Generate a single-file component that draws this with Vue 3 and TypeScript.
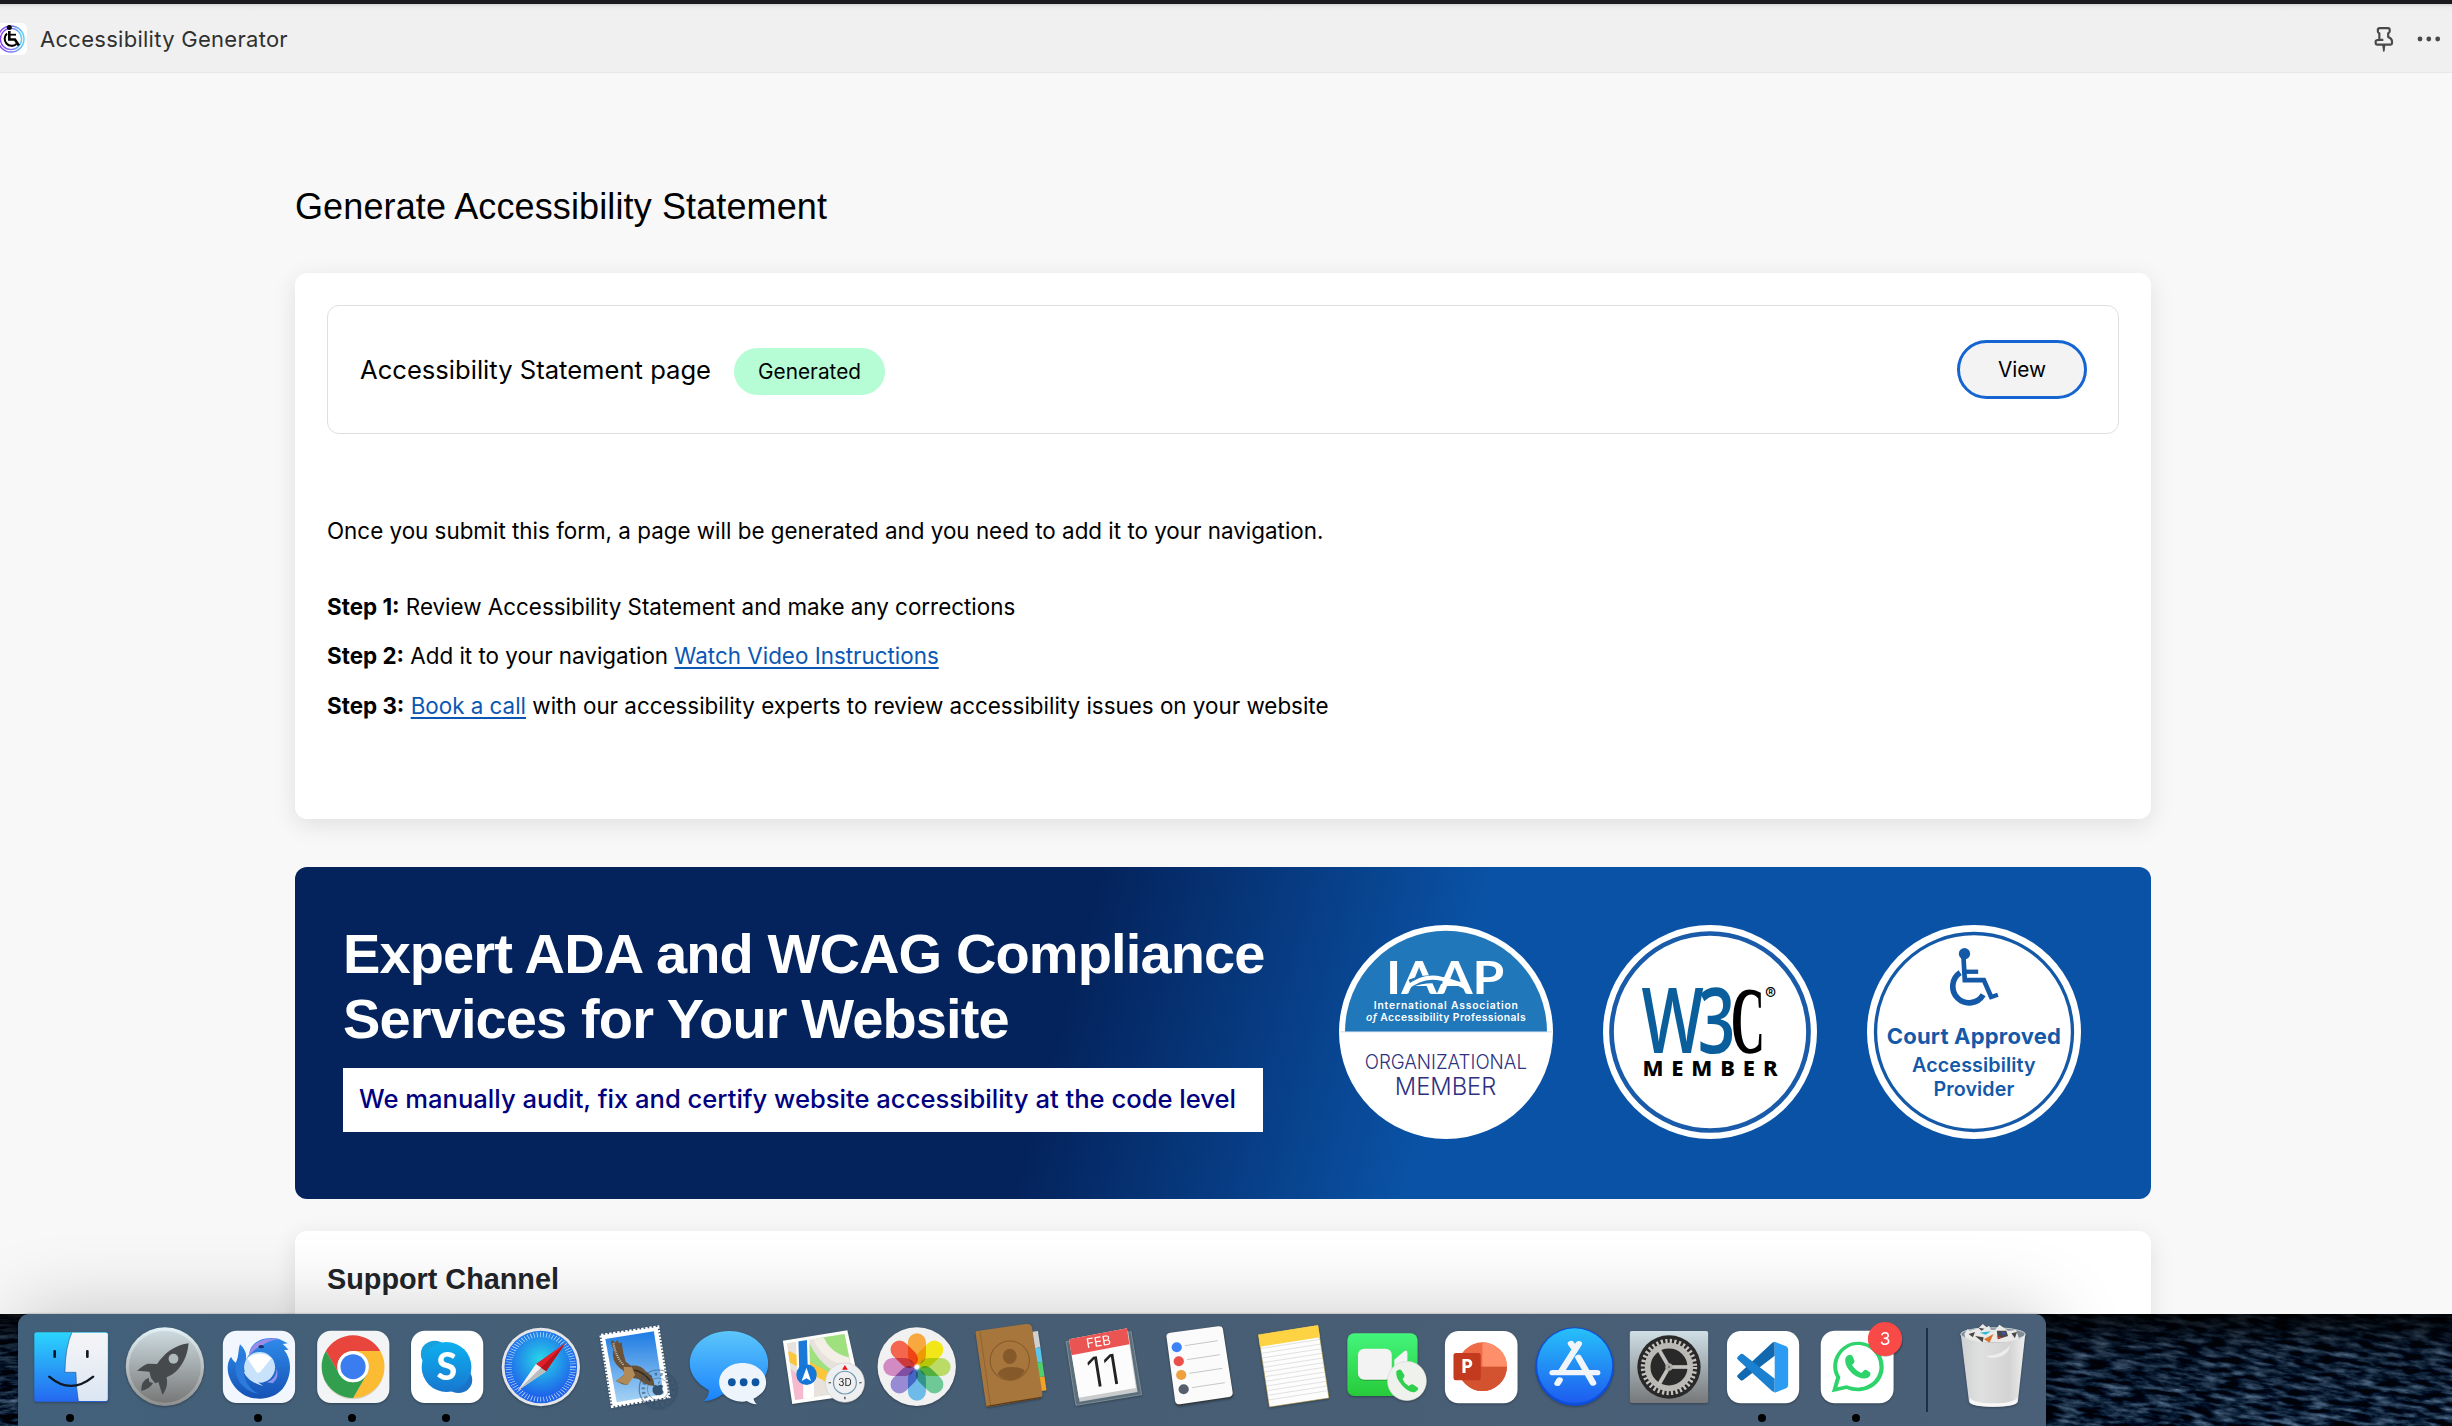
<script setup lang="ts">
interface Swatch { x: number; y: number; color: string }

const petals: string[] = ['#f8a12c', '#f3e500', '#b5d957', '#5fc48d', '#5fb4e8', '#8f7fd0', '#cf80bd', '#f4563c']
const reminders: Swatch[] = [
  { x: 1462, y: 142, color: '#3b82f6' },
  { x: 1467, y: 184, color: '#ea4f4a' },
  { x: 1473, y: 225, color: '#f0a03c' },
  { x: 1479, y: 268, color: '#55606c' },
]
const noteLines: number[] = Array.from({ length: 11 }, (_, i) => i)
const spokes: number[] = [0, 120, 240]
</script>

<template>
  <div class="screen">
    <main class="window">
      <header class="topbar">
        <svg class="app-icon" viewBox="0 0 27 32" width="27" height="32">
          <rect x="-5" y="0" width="32" height="32" rx="6" fill="#fff" />
          <defs>
            <linearGradient id="ring" x1="0" y1="0" x2="1" y2="0">
              <stop offset="0" stop-color="#8a3ff0" /><stop offset=".6" stop-color="#7a7cf5" /><stop offset="1" stop-color="#4fd4f5" />
            </linearGradient>
          </defs>
          <circle cx="11" cy="16" r="13" fill="none" stroke="url(#ring)" stroke-width="1.4" />
          <circle cx="11" cy="16" r="10.6" fill="none" stroke="url(#ring)" stroke-width="1.4" />
          <circle cx="9.3" cy="4.6" r="2.5" />
          <path d="M9.3 8v8.5h5.6l4 6" fill="none" stroke="#000" stroke-width="2.6" />
          <path d="M10 11.7h6" stroke="#000" stroke-width="1.8" />
          <path d="M7 10.5a7 7 0 1 0 9.5 10.5" fill="none" stroke="#000" stroke-width="2.1" />
        </svg>
        <span class="app-title">Accessibility Generator</span>
        <svg class="pin" viewBox="222 78 60 80" width="20" height="26.7">
          <path d="M239 84.500H264Q269 84.500 269 89V94Q269 99 264.500 100V111Q276 116 276 124V130Q276 134 272 134H231Q227 134 227 130V124Q227 119.500 238 119.500H250M238 119V100Q233.500 99 233.500 94V89Q233.500 84.500 239 84.500" fill="none" stroke="#48494a" stroke-width="6.500" stroke-linejoin="round" />
          <path d="M246.500 135h9.500l-2 17-2.500 5-2.500-5z" fill="#48494a" />
        </svg>
        <svg class="dots" viewBox="0 0 26 6" width="26" height="6">
          <circle cx="3" cy="3" r="2.400" /><circle cx="11.800" cy="3" r="2.400" /><circle cx="20.700" cy="3" r="2.400" />
        </svg>
      </header>

      <div class="content">
        <h1>Generate Accessibility Statement</h1>

        <section class="card statement">
          <div class="status-row">
            <span class="status-name">Accessibility Statement page</span>
            <span class="pill">Generated</span>
            <button class="view" type="button">View</button>
          </div>
          <p class="intro">Once you submit this form, a page will be generated and you need to add it to your navigation.</p>
          <p class="step"><b>Step 1:</b> Review Accessibility Statement and make any corrections</p>
          <p class="step"><b>Step 2:</b> Add it to your navigation <a>Watch Video Instructions</a></p>
          <p class="step"><b>Step 3:</b> <a>Book a call</a> with our accessibility experts to review accessibility issues on your website</p>
        </section>

        <section class="banner">
          <div class="pitch">
            <h2>Expert ADA and WCAG Compliance<br />Services for Your Website</h2>
            <div class="tagline"><span>We manually audit, fix and certify website accessibility at the code level</span></div>
          </div>

          <svg class="badge" viewBox="87 75 641 641" width="214" height="214">
            <circle cx="407.500" cy="395.500" r="320.500" fill="#fff" />
            <path d="M105 395A302.500 302.500 0 0 1 710 395Z" fill="#2077b9" />
            <path d="M90 395H725" stroke="#b9cfe6" stroke-width="2" />
            <text x="228" y="283" fill="#fff" font-family="Lato, sans-serif" font-weight="700" font-size="138" textLength="354" lengthAdjust="spacingAndGlyphs">IAAP</text>
            <path d="M300 250Q345 232 398 240" fill="none" stroke="#2077b9" stroke-width="24" />
            <path d="M288 266Q336 222 394 236Q440 244 474 268" fill="none" stroke="#fff" stroke-width="12" />
            <g fill="#fff" font-family="Inter, sans-serif" font-weight="600" font-size="31">
              <text x="191" y="326" textLength="432">International Association</text>
              <text x="168" y="364" textLength="478"><tspan font-style="italic">of</tspan> Accessibility Professionals</text>
            </g>
            <g fill="#2e3180" font-family="Inter, sans-serif" font-weight="300">
              <text x="164" y="506" font-size="60" textLength="486" lengthAdjust="spacingAndGlyphs">ORGANIZATIONAL</text>
              <text x="254" y="585" font-size="73" textLength="304" lengthAdjust="spacingAndGlyphs">MEMBER</text>
            </g>
          </svg>

          <svg class="badge" viewBox="879 75 641 641" width="214" height="214">
            <circle cx="1199.500" cy="395.500" r="320.500" fill="#fff" />
            <circle cx="1199.500" cy="395.500" r="295" fill="none" stroke="#195ba8" stroke-width="14" />
            <text transform="translate(994 458) scale(.73 1)" font-family="Open Sans, sans-serif" font-weight="600" font-size="270" fill="#0a5e9c">W<tspan dx="-24">3</tspan></text>
            <text transform="translate(1262 457) scale(.5 1)" font-family="Liberation Serif, serif" font-weight="700" font-size="284" fill="#000">C</text>
            <text x="1364" y="299" font-family="Inter, sans-serif" font-size="50" fill="#000">®</text>
            <text x="997" y="528" font-family="Noto Sans, sans-serif" font-weight="800" font-size="66" textLength="405" fill="#000">MEMBER</text>
          </svg>

          <svg class="badge" viewBox="141 195 641 641" width="214" height="214">
            <circle cx="461.500" cy="515.500" r="320.500" fill="#fff" />
            <circle cx="461.500" cy="515.500" r="295" fill="none" stroke="#1459a8" stroke-width="10" />
            <circle cx="433" cy="281" r="17" fill="#1459a8" />
            <g fill="none" stroke="#1459a8">
              <path d="M430 292L434 360H491L514 413" stroke-width="14" />
              <path d="M432 335H474" stroke-width="13" />
              <path d="M507 413L533 404" stroke-width="13" />
              <path d="M420 338A49 49 0 1 0 489 404" stroke-width="17" />
            </g>
            <g fill="#1459a8" font-family="Inter, sans-serif">
              <text x="200" y="552" font-size="66" font-weight="700" textLength="522">Court Approved</text>
              <text x="276" y="634" font-size="59" font-weight="600" textLength="370">Accessibility</text>
              <text x="340" y="706" font-size="59" font-weight="600" textLength="242">Provider</text>
            </g>
          </svg>
        </section>

        <section class="card support"><h3>Support Channel</h3></section>
      </div>
    </main>

    <footer class="desktop">
      <svg class="sea" width="2452" height="112">
        <defs>
          <filter id="waves" x="0" y="0" width="100%" height="100%" color-interpolation-filters="sRGB">
            <feTurbulence type="fractalNoise" baseFrequency="0.045 0.19" numOctaves="5" seed="8" />
            <feColorMatrix type="matrix" values="1.1 0 0 0 -0.49  1.2 0 0 0 -0.46  1.3 0 0 0 -0.42  0 0 0 0 1" />
          </filter>
          <linearGradient id="dusk" x1="0" y1="0" x2="0" y2="1">
            <stop offset="0" stop-color="#000" stop-opacity=".85" /><stop offset=".35" stop-color="#000814" stop-opacity=".35" /><stop offset="1" stop-color="#001228" stop-opacity=".15" />
          </linearGradient>
        </defs>
        <g transform="rotate(8 2250 56)"><rect x="1950" y="-60" width="620" height="240" filter="url(#waves)" /></g>
        <rect x="0" y="0" width="40" height="112" filter="url(#waves)" />
        <rect width="2452" height="112" fill="url(#dusk)" />
      </svg>

      <nav class="dock">
        <!-- Finder -->
        <div class="app running"><svg viewBox="58.8 282 230.300 336" preserveAspectRatio="none">
          <defs><linearGradient id="fb" x1="0" y1="0" x2="0" y2="1"><stop stop-color="#2bd5fd" /><stop offset="1" stop-color="#2568f0" /></linearGradient>
            <linearGradient id="fw" x1="0" y1="0" x2="0" y2="1"><stop stop-color="#f6f5f7" /><stop offset="1" stop-color="#dbe6f3" /></linearGradient></defs>
          <rect x="84" y="337" width="181" height="208" rx="6" fill="url(#fb)" />
          <path d="M176 338H259Q264 338 264 344V537Q264 543 259 543H192Q186 500 186 457H159Q160 380 176 338Z" fill="url(#fw)" />
          <path d="M176 338Q160 380 159 457H186Q186 500 192 543" fill="none" stroke="#1d4a7b" stroke-width="1.500" />
          <path d="M134 393V411M214 393V411M121 470Q173 525 228 470" fill="none" stroke="#111820" stroke-width="6.500" stroke-linecap="round" />
        </svg></div>
        <!-- Launchpad -->
        <div class="app"><svg viewBox="289.100 282 230.300 336" preserveAspectRatio="none">
          <defs><linearGradient id="lp" x1="0" y1="0" x2="0" y2="1"><stop stop-color="#cddbe0" /><stop offset="1" stop-color="#787878" /></linearGradient>
            <linearGradient id="lr" x1="0" y1="0" x2="0" y2="1"><stop stop-color="#e3f2f6" /><stop offset="1" stop-color="#8e8e8e" /></linearGradient></defs>
          <ellipse cx="404" cy="440" rx="96" ry="118" fill="url(#lr)" /><ellipse cx="404" cy="440" rx="88" ry="108" fill="url(#lp)" />
          <path d="M462 370C425 375 400 405 385 432L362 431C350 436 342 446 336 452L366 455L370 474L380 490L388 486L398 525C407 510 412 493 408 472C445 455 460 405 462 370Z" fill="#464a4d" />
          <path d="M364 473Q345 482 346 513Q366 508 375 489L366 486Z" fill="#464a4d" /><ellipse cx="425" cy="416" rx="12" ry="15" fill="#b0b9bc" />
        </svg></div>
        <!-- Thunderbird -->
        <div class="app running"><svg viewBox="519.400 282 230.300 336" preserveAspectRatio="none">
          <defs><linearGradient id="tb" x1="0" y1="0" x2="0" y2="1"><stop stop-color="#2f8bea" /><stop offset="1" stop-color="#1552b5" /></linearGradient></defs>
          <rect x="546" y="332" width="177" height="217" rx="34" ry="42" fill="#f2f7ff" />
          <path d="M611 402C612 365 648 347 684 357L705 370L693 372L707 389L696 390C717 420 715 470 692 507C665 545 612 545 584 512C558 482 550 438 566 410C570 420 573 424 578 428C586 408 583 390 588 373C600 387 605 400 602 420Z" fill="url(#tb)" />
          <path d="M611 402C614 368 648 350 684 357Q655 362 642 378Q625 382 611 408Z" fill="#9b8ae8" />
          <path d="M578 428C573 470 590 510 634 522C598 498 594 460 598 430C602 420 605 408 602 400" fill="#2b7bdd" />
          <path d="M654 487Q678 477 678 445Q685 475 668 490Z" fill="#8d91ee" />
          <path d="M597 455Q607 485 645 498Q618 478 614 460Z" fill="#d7ebff" />
          <ellipse cx="636" cy="442" rx="38" ry="46" fill="#c8e2fc" /><path d="M606 415Q636 388 665 414L638 455Q633 461 628 455Z" fill="#fff" />
          <ellipse cx="640" cy="380" rx="7" ry="5" fill="#12376f" />
        </svg></div>
        <!-- Chrome -->
        <div class="app running"><svg viewBox="749.700 282 230.300 336" preserveAspectRatio="none">
          <rect x="777" y="332" width="177" height="217" rx="34" ry="42" fill="#f3f4f5" />
          <ellipse cx="865" cy="446" rx="76" ry="92" fill="#d8d3c5" />
          <g transform="translate(865 440) scale(77 94)">
            <path d="M-.866-.5A1 1 0 0 1 .866-.5H0A.5.5 0 0 0-.433.25Z" fill="#e8453c" />
            <path transform="rotate(120)" d="M-.866-.5A1 1 0 0 1 .866-.5H0A.5.5 0 0 0-.433.25Z" fill="#fbbc34" />
            <path transform="rotate(240)" d="M-.866-.5A1 1 0 0 1 .866-.5H0A.5.5 0 0 0-.433.25Z" fill="#319f4d" />
            <circle r=".5" fill="#fff" /><circle r=".4" fill="#3b7df0" />
          </g>
        </svg></div>
        <!-- Skype -->
        <div class="app running"><svg viewBox="980 282 230.300 336" preserveAspectRatio="none">
          <defs><linearGradient id="sk" x1="0" y1="0" x2="0" y2="1"><stop stop-color="#0eb0f0" /><stop offset="1" stop-color="#1777cf" /></linearGradient></defs>
          <rect x="1007" y="332" width="177" height="217" rx="34" ry="42" fill="#fff" />
          <ellipse cx="1065" cy="402" rx="34" ry="40" fill="#18a0de" /><ellipse cx="1123" cy="480" rx="34" ry="39" fill="#1a73c6" />
          <ellipse cx="1094" cy="441" rx="61" ry="75" fill="url(#sk)" />
          <text transform="translate(1095 480) scale(.82 1)" text-anchor="middle" font-family="Lato, sans-serif" font-weight="900" font-size="112" fill="#fff">S</text>
        </svg></div>
        <!-- Safari -->
        <div class="app"><svg viewBox="1210.300 282 230.300 336" preserveAspectRatio="none">
          <defs><radialGradient id="sf" cy=".4"><stop stop-color="#27d7e8" /><stop offset="1" stop-color="#1e63ea" /></radialGradient></defs>
          <ellipse cx="1325" cy="441" rx="96" ry="118" fill="#e4e5e7" /><ellipse cx="1325" cy="441" rx="89" ry="109" fill="url(#sf)" />
          <ellipse cx="1325" cy="441" rx="79" ry="97" fill="none" stroke="#d4ecff" stroke-width="15" stroke-dasharray="1.700 5.950" />
          <path d="M1385 370L1313 432L1338 454Z" fill="#e2202a" /><path d="M1268 512L1313 432L1338 454Z" fill="#f1f1f1" /><path d="M1268 512L1325 443L1338 454Z" fill="#b9bcc0" /><path d="M1385 370L1325 443L1338 454Z" fill="#b9141d" />
        </svg></div>
        <!-- Mail -->
        <div class="app"><svg viewBox="19.600 42 230.300 336" preserveAspectRatio="none">
          <defs><linearGradient id="ml" x1="0" y1="0" x2="0" y2="1"><stop stop-color="#1d7be3" /><stop offset="1" stop-color="#a7d3f4" /></linearGradient></defs>
          <path d="M52 106L190 81L217 291L80 319Z" fill="#fff" stroke="#fff" stroke-width="9" stroke-dasharray="6 4" />
          <path d="M62 117L181 94L205 283L90 307Z" fill="url(#ml)" />
          <path d="M75 125L80 120L86 128L91 120L96 130L102 127Q105 160 112 185L125 197Q150 195 160 213Q180 225 183 258Q160 257 143 237L127 233L116 255L104 253L88 243L107 226Q112 214 98 205Q75 180 82 150Z" fill="#6a5238" />
          <path d="M107 200L127 202L135 225L116 255L88 243L108 226Z" fill="#b18a58" /><path d="M82 130Q88 170 106 194" stroke="#c9c5bb" stroke-width="5" fill="none" stroke-dasharray="3 3" />
          <path d="M132 210Q155 215 172 242" stroke="#3a2b1c" stroke-width="5" fill="none" />
          <g fill="none" stroke="#34526f" opacity=".6"><ellipse cx="191" cy="267" rx="46" ry="57" stroke-width="3" /><ellipse cx="191" cy="267" rx="36" ry="45" stroke-width="9" stroke-dasharray="6 8" /><ellipse cx="191" cy="267" rx="26" ry="33" stroke-width="2" /></g>
          <path d="M191 257Q199 250 204 259Q197 267 205 276Q198 290 191 284Q184 290 178 275Q176 258 185 255ZM191 254Q191 245 197 243" fill="#34526f" />
        </svg></div>
        <!-- Messages -->
        <div class="app"><svg viewBox="249.900 42 230.300 336" preserveAspectRatio="none">
          <defs><linearGradient id="ms" x1="0" y1="0" x2="0" y2="1"><stop stop-color="#5cc6fb" /><stop offset="1" stop-color="#1a83fd" /></linearGradient></defs>
          <path d="M365 93C418 93 461 135 461 190C461 245 418 285 365 285Q356 285 349 283Q330 302 303 303Q318 288 315 270C285 250 269 222 269 190C269 135 312 93 365 93Z" fill="url(#ms)" />
          <path d="M398 189C430 189 456 215 456 247C456 270 444 285 425 296Q427 306 433 313Q418 312 409 303Q403 305 398 305C366 305 341 279 341 247C341 215 366 189 398 189Z" fill="#eef4fc" />
          <ellipse cx="372" cy="247" rx="9.500" ry="12" fill="#0e56a3" /><ellipse cx="401" cy="247" rx="9.500" ry="12" fill="#0e56a3" /><ellipse cx="430" cy="247" rx="9.500" ry="12" fill="#0e56a3" />
        </svg></div>
        <!-- Maps -->
        <div class="app"><svg viewBox="480.200 42 230.300 336" preserveAspectRatio="none">
          <defs><clipPath id="mp"><path d="M507 130L648 102L676 273L527 300Z" /></clipPath></defs>
          <path d="M497 122L655 91L690 282L520 312Z" fill="#fdfdfb" />
          <g clip-path="url(#mp)">
            <rect x="490" y="90" width="200" height="230" fill="#e7e3dc" />
            <path d="M560 90H700V200Q600 190 575 110Z" fill="#9fe07f" /><path d="M582 105Q600 180 680 190" fill="none" stroke="#f3efe6" stroke-width="26" />
            <path d="M562 130Q590 200 640 225L620 240L560 200Z" fill="#9fe07f" /><path d="M505 165L620 240" stroke="#fbc63c" stroke-width="28" />
            <path d="M505 195L548 240V320H510Z" fill="#f6b9cd" /><path d="M560 240V310" stroke="#fff" stroke-width="26" /><path d="M545 100L548 225" stroke="#fff" stroke-width="32" /><path d="M545 100L548 225" stroke="#1a78d8" stroke-width="21" />
          </g>
          <ellipse cx="555" cy="224" rx="25" ry="31" fill="#1477d8" /><path d="M555 203L566 243L555 235L543 243Z" fill="#fff" />
          <ellipse cx="649" cy="248" rx="48" ry="59" fill="#eeeff1" stroke="#c6c8cb" stroke-width="1.500" /><ellipse cx="649" cy="248" rx="28" ry="34" fill="none" stroke="#6f97b0" stroke-width="3" />
          <path d="M649 195L656 209H642Z" fill="#e11" /><path d="M649 290V298M609 248H615M684 248H690" stroke="#333" stroke-width="3" />
          <text transform="translate(649 259) scale(.82 1)" text-anchor="middle" font-family="Inter, sans-serif" font-size="30" fill="#222">3D</text>
        </svg></div>
        <!-- Photos -->
        <div class="app"><svg viewBox="710.500 42 230.300 336" preserveAspectRatio="none">
          <ellipse cx="825" cy="200" rx="96" ry="118" fill="#f1f1f2" />
          <g transform="translate(825.500 201) scale(.817 1)" style="isolation: isolate">
            <rect v-for="(c, i) in petals" :key="c" class="petal" x="-27" y="-101" width="54" height="94" rx="27" :fill="c" :transform="`rotate(${i * 45})`" />
            <circle r="6" fill="#fff" />
          </g>
        </svg></div>
        <!-- Contacts -->
        <div class="app"><svg viewBox="940.800 42 230.300 336" preserveAspectRatio="none">
          <path d="M1108 95L1122 93L1128 142L1114 145Z" fill="#cfd0d0" /><path d="M1113 145L1128 142L1133 185L1118 188Z" fill="#5cc5ec" /><path d="M1118 188L1133 185L1138 229L1124 232Z" fill="#4fd06d" /><path d="M1124 232L1138 229L1143 271L1128 274Z" fill="#f2a323" />
          <path d="M969 98Q969 94 973 93L1092 72Q1104 71 1107 80L1133 282Q1133 291 1127 294L1000 321Q996 322 995 316Z" fill="#a7763d" />
          <path d="M980 94L1006 318" stroke="#8a5c2a" stroke-width="2" /><path d="M998 319L1130 292" stroke="#5e3c18" stroke-width="4" />
          <ellipse cx="1053" cy="182" rx="48" ry="59" fill="none" stroke="#86592a" stroke-width="2.500" /><ellipse cx="1053" cy="169" rx="17" ry="23" fill="#86592a" /><path d="M1023 222Q1030 202 1053 201Q1080 200 1090 212Q1077 240 1055 241Q1036 240 1023 222Z" fill="#86592a" />
        </svg></div>
        <!-- Calendar -->
        <div class="app"><svg viewBox="1171.100 42 230.300 336" preserveAspectRatio="none">
          <path d="M1191 125L1350 95L1376 284L1215 316Z" fill="#5d6e7b" stroke="#8fa0ab" stroke-width="2" />
          <path d="M1200 125L1343 95L1366 276L1224 305Z" fill="#c9cbcd" /><path d="M1198 118L1340 85L1362 264L1222 293Z" fill="#fcfcfc" />
          <path d="M1198 118L1340 85L1346 133L1204 166Z" fill="#ea5452" />
          <g font-family="Inter, sans-serif" text-anchor="middle"><text transform="translate(1272 139) scale(.82 1) rotate(-9)" font-size="40" fill="#fff">FEB</text>
            <text transform="translate(1288 257) scale(.82 1) rotate(-9)" font-size="126" font-weight="300" fill="#222">11</text></g>
        </svg></div>
        <!-- Reminders -->
        <div class="app"><svg viewBox="1401.400 42 230.300 336" preserveAspectRatio="none">
          <path d="M1437 114Q1435 101 1446 99L1563 79Q1573 78 1576 88L1600 280Q1601 292 1590 295L1470 317Q1460 318 1458 306Z" fill="#343a40" />
          <path d="M1437 112Q1435 101 1446 98L1563 79Q1573 77 1575 86L1599 277Q1600 288 1590 291L1470 313Q1460 314 1458 303Z" fill="#fbfbfb" />
          <g v-for="r in reminders" :key="r.y"><ellipse :cx="r.x" :cy="r.y" rx="12.500" ry="15" :fill="r.color" /><path :d="`M${r.x + 20} ${r.y - 5}L${r.x + 101} ${r.y - 20}`" stroke="#9c9ea0" stroke-width="1.500" /></g>
        </svg></div>
        <!-- Notes -->
        <div class="app"><svg viewBox="112.700 42 230.300 336" preserveAspectRatio="none">
          <path d="M143 104L289 76L316 294L170 321Z" fill="#fdfdfd" stroke="#a48b35" stroke-width="1.500" />
          <path d="M143 104L289 76L294 112L147 140Z" fill="#fdd344" /><path d="M148 146L294 118" stroke="#aaa" stroke-width="1.500" stroke-dasharray="3 2" />
          <path v-for="i in noteLines" :key="i" :d="`M${151 + i * 1.7} ${160 + i * 14}L${296 + i * 1.7} ${132 + i * 14}`" stroke="#cacbcb" stroke-width="1.500" />
        </svg></div>
        <!-- FaceTime -->
        <div class="app"><svg viewBox="343 42 230.300 336" preserveAspectRatio="none">
          <defs><linearGradient id="ft" x1="0" y1="0" x2="0" y2="1"><stop stop-color="#43f57c" /><stop offset="1" stop-color="#27cb3a" /></linearGradient></defs>
          <rect x="361" y="100" width="172" height="188" rx="17" ry="20" fill="url(#ft)" />
          <rect x="387" y="148" width="83" height="94" rx="15" ry="18" fill="#228d34" opacity=".7" /><rect x="387" y="146" width="83" height="93" rx="15" ry="18" fill="#f2f3f2" /><path d="M476 179L501 153Q508 149 508 158V225L476 205Z" fill="#f2f3f2" />
          <ellipse cx="507" cy="243" rx="48" ry="59" fill="#eef1ec" stroke="#c3c9c3" stroke-width="1" />
          <path d="M481 214Q488 206 493 210L501 226Q502 232 496 237Q500 249 511 258Q517 252 521 253L534 263Q536 270 527 276Q512 280 495 256Q478 233 481 214Z" fill="#2fd04d" />
        </svg></div>
        <!-- PowerPoint -->
        <div class="app"><svg viewBox="573.300 42 230.300 336" preserveAspectRatio="none">
          <rect x="600" y="93" width="178" height="217" rx="34" ry="42" fill="#fff" />
          <ellipse cx="692" cy="200" rx="60" ry="73" fill="#ed6c47" /><path d="M692 127A60 73 0 0 1 752 200H692Z" fill="#ff8f6b" /><path d="M632 200A60 73 0 0 0 752 200Z" fill="#d35230" />
          <rect x="621" y="159" width="67" height="82" rx="6" ry="7" fill="#c43a1f" />
          <text transform="translate(654 218) scale(.82 1)" text-anchor="middle" font-family="Open Sans, sans-serif" font-weight="700" font-size="59" fill="#fff">P</text>
        </svg></div>
        <!-- App Store -->
        <div class="app"><svg viewBox="803.600 42 230.300 336" preserveAspectRatio="none">
          <defs><linearGradient id="as" x1="0" y1="0" x2="0" y2="1"><stop stop-color="#27c0fa" /><stop offset="1" stop-color="#1d5cf0" /></linearGradient></defs>
          <ellipse cx="918" cy="200" rx="96" ry="118" fill="#0f4fd8" /><ellipse cx="918" cy="197" rx="92" ry="112" fill="url(#as)" />
          <path d="M864 218H973M909 131L916 143M928 131L886 212M927 172L963 249M881 240L876 250" fill="none" stroke="#f1f4f8" stroke-width="16" stroke-linecap="round" />
        </svg></div>
        <!-- System Settings -->
        <div class="app"><svg viewBox="1033.900 42 230.300 336" preserveAspectRatio="none">
          <defs><linearGradient id="st" x1="0" y1="0" x2="0" y2="1"><stop stop-color="#cfdfe6" /><stop offset="1" stop-color="#767879" /></linearGradient></defs>
          <rect x="1053" y="93" width="192" height="216" rx="5" fill="url(#st)" />
          <g transform="translate(1149 201) scale(.817 1)">
            <circle r="95" fill="#292929" /><circle r="76" fill="none" stroke="#c5c4c1" stroke-width="17" stroke-dasharray="6.500 6.767" />
            <circle r="64" fill="none" stroke="#bbb9b5" stroke-width="17" />
            <path v-for="s in spokes" :key="s" d="M0 0H64" stroke="#c2c0bc" stroke-width="11" :transform="`rotate(${s})`" /><circle r="11" fill="#aaa9a5" /><circle r="3" fill="#666" />
          </g>
        </svg></div>
        <!-- VS Code -->
        <div class="app running"><svg viewBox="1264.200 42 230.300 336" preserveAspectRatio="none">
          <rect x="1291" y="93" width="177" height="217" rx="34" ry="42" fill="#fff" />
          <path d="M1408 125V167L1330 241Q1327 243 1324 240L1317 232Q1314 228 1318 224L1402 128Z" fill="#1268ae" />
          <path d="M1408 277V236L1330 162Q1327 160 1324 163L1317 171Q1314 175 1318 179L1402 274Z" fill="#1a80cf" />
          <path d="M1408 125L1436 139Q1441 142 1441 149V255Q1441 262 1436 265L1408 278Z" fill="#2b9cf1" />
        </svg></div>
        <!-- WhatsApp -->
        <div class="app running"><svg viewBox="70 162 219.300 336" preserveAspectRatio="none">
          <rect x="95" y="212" width="170" height="218" rx="33" ry="42" fill="#fff" />
          <path d="M121 397L131 352C115 315 129 270 158 252C195 230 242 265 242 320C242 376 197 408 155 387Z" fill="#2ed36c" />
          <path d="M134 382L141 351C124 316 138 274 163 260C196 243 232 274 232 320C232 366 194 396 156 376Z" fill="#fff" />
          <path d="M152 301Q152 287 162 284Q168 283 170 290L174 304Q174 309 168 315Q178 334 190 339L197 330Q200 328 203 331L211 338Q212 352 200 355Q185 357 169 341Q152 322 152 301Z" fill="#2ed36c" />
          <ellipse cx="246" cy="239" rx="40" ry="51" fill="#1e2d3c" opacity=".35" /><ellipse cx="245" cy="237" rx="40" ry="51" fill="#fa4a48" />
          <text transform="translate(245 255) scale(.78 1)" text-anchor="middle" font-family="Inter, sans-serif" font-size="52" fill="#fff">3</text>
        </svg></div>
        <span class="divider"></span>
        <!-- Trash -->
        <div class="app"><svg viewBox="387.300 162 219.300 336" preserveAspectRatio="none">
          <defs><linearGradient id="tr" x1="0" y1="0" x2="1" y2="0"><stop stop-color="#cfd1d3" /><stop offset=".3" stop-color="#e0e0e0" /><stop offset=".75" stop-color="#d3d3d4" /><stop offset="1" stop-color="#eee" /></linearGradient></defs>
          <ellipse cx="497" cy="223" rx="75" ry="20" fill="#7f8b96" stroke="#c8d0d6" stroke-width="3" />
          <path d="M430 222L438 207L443 212L463 205L473 192L482 202L488 197L492 209H502L512 194L532 212L551 210L558 238L530 248H460L434 238Z" fill="#e9e9e7" />
          <path d="M440 222L455 216L450 232ZM463 203L477 206L470 212ZM506 212L528 212L532 228L508 238ZM455 228L475 232L473 247ZM540 220L553 216L548 235Z" fill="#4a4746" />
          <path d="M466 218L492 214L480 224Z" fill="#28b9d8" /><path d="M476 238L498 222L489 248Z" fill="#d9722d" /><path d="M515 214L528 218L522 228Z" fill="#3b55b0" /><path d="M507 228L517 232L510 238Z" fill="#c8372d" />
          <path d="M422 224Q440 246 498 248Q553 247 572 224L555 425Q550 440 498 440Q446 440 441 425Z" fill="url(#tr)" /><path d="M480 288Q520 285 537 255Q533 293 492 294Z" fill="#f5f5f5" opacity=".7" />
          <path d="M443 412Q450 430 498 430Q546 430 554 412L553 427Q545 440 498 440Q450 440 443 427Z" fill="#f7f7f7" />
        </svg></div>
      </nav>
    </footer>
  </div>
</template>

<style>
body { margin: 0; background: #000; }
</style>

<style scoped>
.screen { width: 2452px; height: 1426px; overflow: hidden; display: flex; flex-direction: column; font-family: Inter, "Liberation Sans", sans-serif; color: #000; }
.window { height: 1314px; flex: none; overflow: hidden; background: #f8f8f8; }
.topbar { height: 73px; box-sizing: border-box; border-top: 4px solid #1a1a1c; border-bottom: 1px solid #e7e7e7; background: linear-gradient(#d4d4d4, #ececec 3px, #f0f0f0 8px); display: flex; align-items: center; padding-top: 1px; }
.app-title { margin-left: 13px; font-size: 22px; line-height: 30px; color: #303030; letter-spacing: .28px; flex: 1; }
.pin { margin-right: 23px; margin-top: 1px; }
.dots { margin-right: 9px; fill: #48494a; }
.content { width: 1856px; margin-left: 295px; }
h1, h2, h3, p { margin: 0; }
h1 { padding-top: 114px; font: 400 36px/40px "Liberation Sans", sans-serif; letter-spacing: .12px; white-space: nowrap; }
.card { background: #fff; border-radius: 12px; box-shadow: 0 6px 24px rgba(0, 0, 0, .1); }
.statement { margin-top: 46px; height: 546px; box-sizing: border-box; padding: 32px; }
.status-row { height: 129px; box-sizing: border-box; border: 1px solid #dfdfdf; border-radius: 12px; padding: 0 31px 0 32px; display: flex; align-items: center; }
.status-name { font-size: 25.600px; line-height: 32px; white-space: nowrap; }
.pill { margin: 4px 0 0 23px; width: 151px; height: 47px; border-radius: 24px; background: #b6fcd5; font-size: 20.800px; line-height: 48px; text-align: center; }
.view { margin-left: auto; width: 130px; height: 59px; padding: 0; border: 3px solid #1464d2; border-radius: 30px; background: #f3f3f3; font: 400 20.800px Inter, sans-serif; color: #000; }
.intro, .step { font-size: 22.400px; line-height: 30px; white-space: nowrap; }
.intro { margin-top: 82px; margin-bottom: 46px; }
.step { margin-bottom: 19.400px; }
.step b { font-weight: 700; }
.step a { color: #0b57b4; text-decoration: underline; text-decoration-thickness: 2px; text-underline-offset: 3px; }
.banner { margin-top: 48px; height: 332px; box-sizing: border-box; border-radius: 12px; padding: 0 70px 2px 48px; background: linear-gradient(105deg, #04235c 41.500%, #0a52a5 61.500%); display: flex; align-items: center; gap: 50px; }
.pitch { width: 920px; margin-right: 26px; padding-bottom: 11px; }
h2 { font: 700 56px/65px "Liberation Sans", sans-serif; letter-spacing: -.88px; color: #fff; white-space: nowrap; }
.tagline { margin-top: 17px; height: 64px; background: #fff; padding-left: 16px; font-size: 25.600px; line-height: 62px; font-weight: 500; color: #000080; white-space: nowrap; }
.badge { flex: none; display: block; }
.support { margin-top: 32px; height: 200px; padding: 32px; box-sizing: border-box; }
h3 { font: 700 28.800px/32px "Liberation Sans", sans-serif; color: #212529; }
.desktop { height: 112px; flex: none; background: #020a14; display: flex; position: relative; }
.sea { position: absolute; left: 0; top: 0; }
.dock { position: relative; margin-left: 18px; width: 2028px; height: 112px; box-sizing: border-box; padding-left: 6px; border-radius: 11px 11px 0 0; background: linear-gradient(90deg, #43607a, #465d73 50%, #4a6078); box-shadow: 0 0 80px rgba(0, 0, 0, .22), 0 0 2px rgba(0, 0, 0, .45); display: flex; }
.app { position: relative; width: 94px; height: 112px; flex: none; }
.app svg { display: block; width: 94px; height: 112px; filter: drop-shadow(0 1px 1px rgba(0, 0, 0, .3)); }
.running::after { content: ""; position: absolute; left: 42px; top: 100px; width: 8px; height: 8px; border-radius: 50%; background: #000; }
.petal { mix-blend-mode: multiply; opacity: .9; }
.divider { width: 2px; height: 84px; margin: 14px 18px 0 22px; background: #18324c; }
</style>
